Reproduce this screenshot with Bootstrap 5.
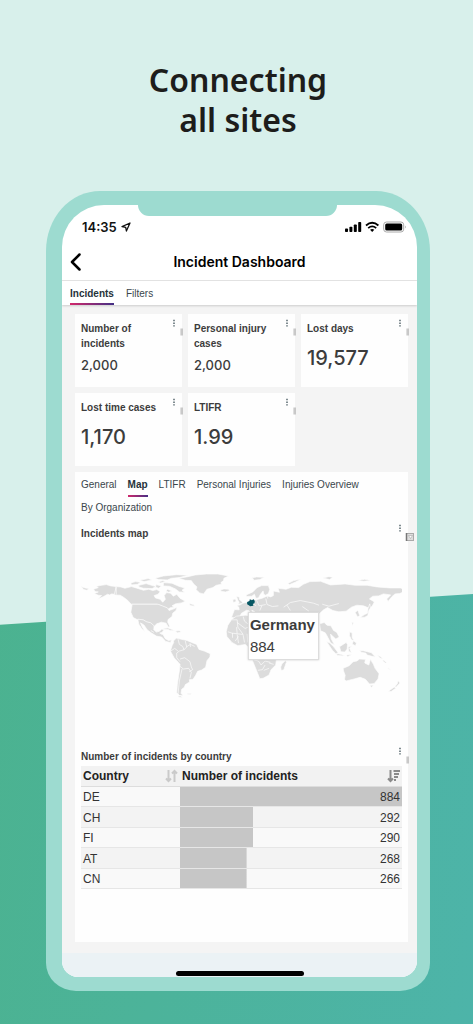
<!DOCTYPE html>
<html lang="en">
<head>
<meta charset="utf-8">
<meta name="viewport" content="width=device-width, initial-scale=1">
<title>Incident Dashboard</title>
<link href="https://cdn.jsdelivr.net/npm/bootstrap@5.3.0/dist/css/bootstrap.min.css" rel="stylesheet">
<style>
  body { background: #d8f0eb; font-family: "Liberation Sans", Arial, sans-serif; color: #3c3c3c; }
  .promo { position: relative; isolation: isolate; min-height: 100vh; padding: 60px 43px 33px 46px; }
  .promo::before {
    content: ""; position: absolute; inset: 0; z-index: -1;
    background: linear-gradient(100deg, #4bb28b, #4db4a9);
    clip-path: polygon(0 61%, 100% 58%, 100% 100%, 0 100%);
  }
  .headline { font: 600 32px/40px "Noto Sans", "Open Sans", sans-serif; color: #1d1d1b; margin: 0 0 51px; }
  .phone { background: #9ddbd0; border-radius: 54px 54px 30px 30px / 60px 60px 28px 28px; padding: 14px 13px 14px 16px; }
  .screen { position: relative; background: #fff; border-radius: 42px 42px 16px 16px; overflow: hidden; }
  .notch { position: absolute; top: 0; left: 76px; right: 80px; height: 11px; background: #9ddbd0; border-radius: 0 0 12px 12px; }
  .inter { font-family: Inter, sans-serif; }
  .status { height: 32px; padding: 12px 10px 0 20px; color: #111; font-size: 13px; line-height: 20px; font-weight: 600; }
  .titlebar { display: grid; grid-template-columns: 24px 1fr 24px; height: 44px; padding-top: 6px; border-bottom: 1px solid #e4e4e4; color: #000; }
  .screen-title { font-size: 14px; line-height: 20px; font-weight: 600; margin: 0; }
  .plain { border: 0; padding: 0; background: none; display: flex; color: inherit; }
  .tabs a { font-size: 10px; line-height: 12px; padding: 7px 0 3px; color: #3a464c; text-decoration: none; border-bottom: 2px solid transparent; }
  .tabs a.active { font-weight: 700; color: #26323a; border-image: linear-gradient(90deg, #d6286a, #3f2f86) 1; }
  .main-tabs { padding: 0 8px; gap: 12px; box-shadow: 0 1px 2px #ccc; position: relative; }
  .content { background: #f4f4f4; padding: 9px 9px 11px 13px; }
  .tiles { display: grid; grid-template-columns: repeat(3, minmax(0, 1fr)); gap: 6px; margin-bottom: 6px; }
  .tile, .panel { position: relative; background: #fefefe; }
  .tile { height: 73px; padding: 7px 22px 0 6px; }
  .tile-title { font-size: 10px; line-height: 15px; font-weight: 700; margin: 0; }
  .figure-md { font-size: 13px; line-height: 20px; font-weight: 500; margin-top: 4px; }
  .figure-lg { font-size: 20px; line-height: 24px; font-weight: 500; margin-top: 10px; }
  .tools { position: absolute; top: 5px; right: -1px; }
  .panel { padding: 7px 6px 53px; }
  .panel-tabs { column-gap: 11px; margin-bottom: 1px; }
  .panel-tabs a { padding: 0 0 4px; margin-bottom: 5px; }
  .section { position: relative; }
  .section .tools { top: -2px; right: -7px; }
  .map { position: relative; margin: 23px 0 35px; }
  .map svg { display: block; width: 100%; }
  .maptip { position: absolute; left: 52%; top: 48px; border: 1px solid #ddd; background: #fff; padding: 1px 3px 1px 1px; font-size: 15px; line-height: 22px; box-shadow: 0 0 2px #ccc; }
  .data { width: 100%; font-size: 12px; line-height: 18px; table-layout: fixed; color: #333; margin-top: 2px; }
  .data th, .data td { padding: 1px 2px 0; border-bottom: 1px solid #e6e6e6; }
  .data th { height: 21px; background: #f2f2f2; color: #222; border-bottom: 1px solid #ddd; }
  .data td { height: 20px; background-color: #f9f9f9; }
  .data tbody tr:nth-child(even) td { height: 21px; background-color: #f3f3f3; }
  .data .first { width: 99px; }
  .data td.bar { background-image: linear-gradient(#c6c6c6, #c6c6c6); background-repeat: no-repeat; background-size: var(--share) 100%; }
  .homebar { background: #ebf2f5; height: 24px; padding-top: 18px; }
  .homebar span { width: 128px; height: 5px; border-radius: 3px; background: #000; }
</style>
</head>
<body>
<svg width="0" height="0" class="position-absolute" aria-hidden="true">
  <symbol id="tools" viewBox="0 0 12 18">
    <path d="M2 1.5h2M2 4.2h2M2 6.9h2" stroke="#7f8b90" stroke-width="1.4"/>
    <path d="M9.500 9.500v7" stroke="#dedede"/><path d="M11 9.500v7" stroke="#bcbcbc" stroke-width="1.600"/>
  </symbol>
</svg>
<div class="promo">
  <h1 class="headline text-center">Connecting<br>all sites</h1>
  <div class="phone">
    <div class="screen">
      <div class="notch"></div>
      <div class="status inter d-flex justify-content-between align-items-center">
        <div class="d-flex align-items-center gap-1">14:35
          <svg width="10" height="10" viewBox="0 0 10 10"><path d="M9 1 1 4.600l3.700.7L5.400 9z" fill="none" stroke="#111" stroke-width="1.300" stroke-linejoin="round"/></svg>
        </div>
        <svg width="62" height="12" viewBox="0 0 62 12">
          <g fill="#000"><rect y="7.500" width="3" height="3.500" rx=".8"/><rect x="4.400" y="5.800" width="3" height="5.200" rx=".8"/><rect x="8.800" y="3.400" width="3" height="7.600" rx=".8"/><rect x="13.200" y="1" width="3" height="10" rx=".8"/><path d="m27.200 11-2.100-2.300q2.100-1.600 4.200 0z"/></g>
          <g fill="none" stroke="#000" stroke-width="1.800"><path d="M21 4.500q6.200-5.500 12.400 0M23.200 7.100q4-3.400 8 0"/></g>
          <rect x="38.700" y="1" width="20" height="10" rx="2.800" fill="none" stroke="#aaa"/><rect x="40.200" y="2.500" width="17" height="7" rx="1.500"/><path d="M60 4.500q1.500 1.500 0 3z" fill="#999"/>
        </svg>
      </div>
      <header class="titlebar align-items-center">
        <button class="plain ps-2" type="button" aria-label="Back"><svg width="11" height="18" viewBox="0 0 11 18"><path d="M9.500 1.500 2 9l7.500 7.500" fill="none" stroke="#000" stroke-width="2.500" stroke-linecap="round" stroke-linejoin="round"/></svg></button>
        <h2 class="screen-title inter text-center">Incident Dashboard</h2>
      </header>
      <nav class="tabs main-tabs d-flex">
        <a class="active" href="#incidents" aria-current="page">Incidents</a>
        <a href="#filters">Filters</a>
      </nav>
      <main class="content">
        <div class="tiles">
          <section class="tile"><h3 class="tile-title">Number of<br>incidents</h3><div class="figure-md inter">2,000</div><button class="plain tools" type="button" aria-label="Options"><svg width="12" height="18"><use href="#tools"/></svg></button></section>
          <section class="tile"><h3 class="tile-title">Personal injury cases</h3><div class="figure-md inter">2,000</div><button class="plain tools" type="button" aria-label="Options"><svg width="12" height="18"><use href="#tools"/></svg></button></section>
          <section class="tile"><h3 class="tile-title">Lost days</h3><div class="figure-lg inter">19,577</div><button class="plain tools" type="button" aria-label="Options"><svg width="12" height="18"><use href="#tools"/></svg></button></section>
          <section class="tile"><h3 class="tile-title text-nowrap">Lost time cases</h3><div class="figure-lg inter">1,170</div><button class="plain tools" type="button" aria-label="Options"><svg width="12" height="18"><use href="#tools"/></svg></button></section>
          <section class="tile"><h3 class="tile-title">LTIFR</h3><div class="figure-lg inter">1.99</div><button class="plain tools" type="button" aria-label="Options"><svg width="12" height="18"><use href="#tools"/></svg></button></section>
        </div>
        <div class="panel">
          <nav class="tabs panel-tabs d-flex flex-wrap">
            <a href="#general">General</a>
            <a class="active" href="#map" aria-current="page">Map</a>
            <a href="#ltifr">LTIFR</a>
            <a href="#injuries">Personal Injuries</a>
            <a href="#overview">Injuries Overview</a>
            <a href="#organization">By Organization</a>
          </nav>
          <section class="section">
            <h3 class="tile-title">Incidents map</h3>
            <button class="plain tools" type="button" aria-label="Options"><svg class="me-n1" width="18" height="18" viewBox="0 0 18 18" overflow="visible"><path d="M8 1.500h2M8 4.200h2M8 6.900h2" stroke="#7f8b90" stroke-width="1.400"/><rect x="15.500" y="9.500" width="7" height="7" fill="#ddd" stroke="#aaa"/><path d="M15.500 9v8" stroke="#777" stroke-width="1.500"/><path d="M17.500 11.500h4l-2 3z" fill="#fff" stroke="#999" stroke-width=".5"/></svg></button>
            <div class="map">
              <svg viewBox="30 0 966 450" role="img" aria-label="World map of incidents">
                <g fill="#dcdcdc" stroke="#fdfdfd" stroke-width="2" stroke-linejoin="round">
                  <path d="M31 68 42 72l12 2-6 5-10-2z"/>
                  <path d="m68 76 14-5-6-4 16-3 14-2 14 4 16 2v24l-14-2-6 3-6-2-12 7-18 8 12-11-10-1-12-5 12-5-10-1z"/>
                  <path d="m136 68 14 1 12 4 20-5 14 4 22 7 16-3 12 4 12-3 10 6-6 8-12 4 4 7 14 4 8 9 8-9-4-11 8-9 12 2 8 9 10-6 10 12 16 9-12 5-18 3-10 6 6 4-12 2-8 6-5-6-26-11h-78l-11-12-12-9-10-6-18-1z"/>
                  <path d="M184 121h78l28 11 5 8 14-5 10-5-3 10-10 8-2 10-12 9-1 8 6 12-4 3-7-12-14-3-14 5-8 8-10-9-12-3-10-7-18-1-13-7-7-16z"/>
                  <path d="m201 166 16 2 11 6 12 3 10 9-1 12 8 7 10-3 5-6 8 1-6 9-7 2 10 4 6 12 10 6 10-1-4 7-14-3-12-13-16-3-16-10-12-9-9-14-11-7 4 10 9 16-9-8-9-14z"/>
                  <path d="m278 194 12-2 14 5 8 4-13-1-9-4-10 0zM314 202l12-1 6 4-12 2z"/>
                  <path d="m180 57 14-4 15 2-8 6-19 2zM204 64l22-5 16 5 14 4-12 6-26-1-14-4zM206 49l26-5 12 4-24 5zM252 43l26-7 40-4 34 2-26 7-24 2-12 5-26-1zM256 62l16 4-8 7-10-3zM278 56l26 2 20 9 18 5-8 7 8 6-16-1-12-9-18-8-18-1zM262 54l14-4 8 3-14 4zM290 76l14 5-10 4-8-4z"/>
                  <path d="m324 43 28-5 22-5 34-3 34 0 32 6-14 7-1 7-8 6 2 5-16 3-10 7-18 5-10 14-12-3-11-10 3-8-10-9-7-10-18-1-10-3zM450 78l10-3 14 1 3 4-12 4-14-2z"/>
                  <path d="m356 119 12 3 4 5-14-2z"/>
                  <path d="m308 232 9-9 12 3 20 4 14 6 15 6 7 15 16 5 18 8-1 10-9 11-4 20-12 8-12 4-6 12-8 12-11 1 1 7-13 8-3 8-8 6-2 12 6 7-10 0-9-8 2-26 6-40 2-20-18-20-11-20 5-16 5-10z"/>
                  <path d="m322 397 8 0 5 5-12-2zM350 390l12 0-2 3-8 0z"/>
                  <g fill="none"><path d="M136 68v24M322 226l4 16 10 6 4 10-14 4-8 6 0 14 10 12M340 258l12-12 8-4 12 6M344 232l4 18M358 238l2 12M300 262l12-8 10 8M328 286l14-4 16 12 4 16 4 8-10 6M328 308l10 8 16-2 8 12-4 18M334 316l-8 36-4 40M240 200l10 6M272 212l8-4"/></g>
                  <!-- Europe and Africa -->
                  <path d="m498 98 8 1 1 8 7 6 3 5-15 3 4-6-4-6zM487 107l8-2 2 8-9 3z"/>
                  <path d="m492 137 14 1-1-8-6-5 10-2 8-5 16-4 8-9 14 3 20-5 16-7 10 3 8-4 0-14 18 4-4-12 24 3 16-6 22 1 14-10 20-8 32-1 16 6 14 5 44-3 30 4 36 0 30 5 38 3 32 0 12 4-2 8-12 5-14 1-9 8-12 15-4-8 12-12-22-3-14 6-18 1-10 8 15 9-7 13-8 6-18-7-20-2-16 6-16 12-22 2-18-4-16-9-12 7-14 13H560l-8-8-8-4 4 10 4 8-8-4-8-12-8-2-16 10-3 9-14 6-12-4z"/>
                  <path d="m527 93 20-9 13-13 14-6 20 0 4 12-4 12-8 5-6-3-2-10-8 10-6 11-8 1-4-12-8 6-16 1z"/>
                  <path d="m484 166 14-9 26-3 18 2 20 8h90v80l-10 22-24 22-2 16-14 14-6 16-18 10-10 1-10-25-14-34-4-30-16-14-22 4-18-10-15-18-2-14 5-20z"/>
                  <path d="m635 300 11-10 2 6-8 23-8 1-1-10z"/>
                  <g fill="none"><path d="M484 168l16 0 2 22 16 22-18-2-16-2-12-4M500 176l24 18 18-8M498 190l2 20M518 158l4 14 20 16M486 208v14M500 212l4 26M518 214l4 22M530 210l2 26M494 232l10-14M548 288l16 4 8 12 12-12 16 4M562 320l14-2 8-14M580 320l16-6M596 298l14 4M544 112l12 14M558 108l8 18 20-4M586 104l4 18 16 6 18-2M574 126l-6 14M592 104l-2-14M640 130l20-14 30-6 40 8 16 6M650 124l10 16M696 128l20 14M756 121l20 6 30-8"/></g>
                  <!-- Arctic islands -->
                  <path d="m542 42 16-3 24 1-14 7-18 2-2-5zM652 59l18-9 22-5-16 9-18 8zM758 42l18-4 12 2-10 7zM862 50l22-4 18 4-22 2z"/>
                  <!-- Eastern and southern Asia -->
                  <path d="m748 180 14-4 8 8 12 2 8 14 10 6 7 14-10 6-8-7-8-8 2 14 10 19-12-7-8-16-8-14-14-6zM769 233l10 5 12 12 12 16-4 6-13-13zM798 269l16 3 10 5-22-2zM808 249l20-13 4 6-1 14-7 9-12-1zM834 250l12-3-8 6 6 14-8-4zM838 204l8 4 0 14 6 8-8-2-6-12zM850 231l9 7-3 8-10-5zM828 274l18-2-14 7zM868 261l12 0 24 6 12 13-13-3-12-3-4-6-12-2zM855 146l8-7 6 17-7 3zM899 120l2 12-5 9-3 14-9 5-14 1 12-8 10-5 2-15zM845 175l5 1-3 11z"/>
                  <!-- Oceania -->
                  <path d="m819 314 18-8 12-12 11-2 8-6 18 1-2 11 12 6 5-17 9 15 5 12 12 16-3 16-12 14-14 1-12-14-16-6-18 5-24 6-5-5 2-12-5-13zM900 365l10 0-6 7zM984 351l6 7-12 13-3-2 7-9zM973 370l4 4-14 10-8-1z"/>
                  <path d="m922 274 10 5 7 7-10-4zM940 289l10 8-4 1-8-6zM954 312l8 7-7-3z"/>
                </g>
                <path d="m530 114 7-3 1-5 6 3 6-3 3 6-1 6-5 2 2 6-10 1-4-3-5-3z" fill="#075763"/>
              </svg>
              <div class="maptip"><strong>Germany</strong><br>884</div>
            </div>
          </section>
          <section class="section">
            <h3 class="tile-title">Number of incidents by country</h3>
            <button class="plain tools" type="button" aria-label="Options"><svg width="12" height="18"><use href="#tools"/></svg></button>
            <table class="data">
              <thead><tr>
                <th class="first"><div class="d-flex justify-content-between align-items-center">Country <svg width="13" height="14" viewBox="0 0 13 14"><g fill="none" stroke="#cacaca" stroke-width="2"><path d="M3.500 1v11M1 9.500 3.500 12 6 9.500M9.500 13V2M7 4.500 9.500 2 12 4.500"/></g></svg></div></th>
                <th><div class="d-flex justify-content-between align-items-center">Number of incidents <svg width="13" height="14" viewBox="0 0 13 14"><g fill="none" stroke="#8a8a8a"><path stroke-width="2" d="M3.500 1v11M1 9.500 3.500 12 6 9.500"/><path stroke-width="1.800" d="M6.500 2H13M7 5h5M7 8h4M7 11h2"/></g></svg></div></th>
              </tr></thead>
              <tbody>
                <tr><td>DE</td><td class="bar text-end" style="--share:100%">884</td></tr>
                <tr><td>CH</td><td class="bar text-end" style="--share:33%">292</td></tr>
                <tr><td>FI</td><td class="bar text-end" style="--share:33%">290</td></tr>
                <tr><td>AT</td><td class="bar text-end" style="--share:30%">268</td></tr>
                <tr><td>CN</td><td class="bar text-end" style="--share:30%">266</td></tr>
              </tbody>
            </table>
          </section>
        </div>
      </main>
      <div class="homebar d-flex justify-content-center"><span></span></div>
    </div>
  </div>
</div>
<script src="https://cdn.jsdelivr.net/npm/bootstrap@5.3.0/dist/js/bootstrap.bundle.min.js"></script>
</body>
</html>
